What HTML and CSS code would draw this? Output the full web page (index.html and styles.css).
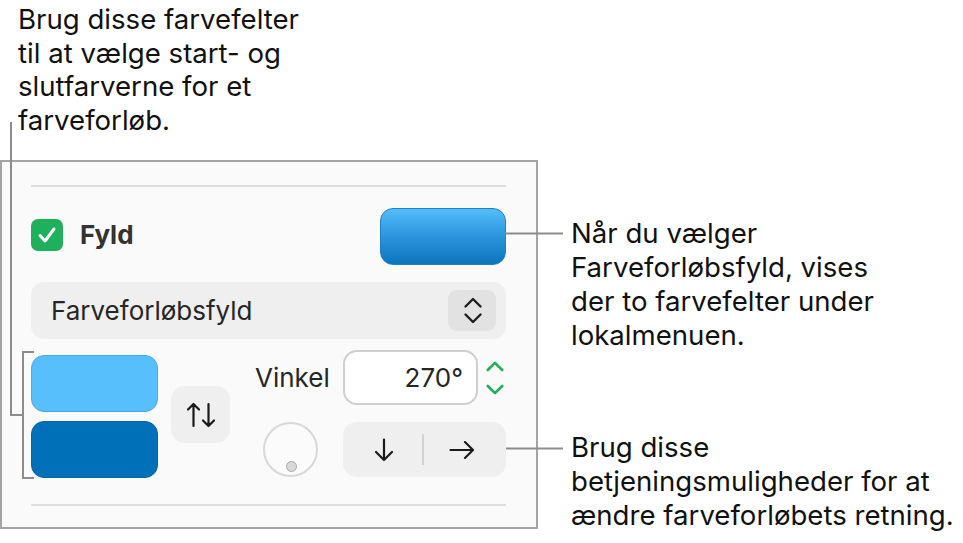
FILE: index.html
```html
<!DOCTYPE html>
<html lang="da">
<head>
<meta charset="utf-8">
<title>Fyld</title>
<link rel="stylesheet" href="styles.css">
</head>
<body>
<div class="figure">
  <div class="col-left">
    <p class="callout callout-tl">Brug disse farvefelter<br>til at vælge start- og<br>slutfarverne for et<br>farveforløb.</p>
    <section class="panel">
      <div class="sep"></div>
      <div class="fill-row">
        <span class="checkbox"><svg width="32" height="32" viewBox="0 0 32 32"><polyline points="9,16.5 14,22 23,10" fill="none" stroke="#fff" stroke-width="3" stroke-linecap="round" stroke-linejoin="round"/></svg></span>
        <span class="fill-label">Fyld</span>
        <span class="swatch swatch-main"></span>
      </div>
      <div class="popup">
        <span class="popup-text">Farveforløbsfyld</span>
        <span class="popup-btn"><svg width="48" height="42" viewBox="0 0 48 42"><path d="M17.5 16.5 L25 9 L32.5 16.5 M17.5 24.5 L25 32 L32.5 24.5" fill="none" stroke="#1f1f1f" stroke-width="2.4" stroke-linecap="round" stroke-linejoin="round"/></svg></span>
      </div>
      <div class="gradient-row">
        <div class="swatches">
          <span class="swatch swatch-light"></span>
          <span class="swatch swatch-dark"></span>
        </div>
        <div class="swap"><svg width="32" height="28" viewBox="0 0 32 28"><path d="M8.5 25 V3 M3 8.5 L8.5 3 L14 8.5 M23.5 3 V25 M18 19.5 L23.5 25 L29 19.5" fill="none" stroke="#1a1a1a" stroke-width="2.2" stroke-linecap="round" stroke-linejoin="round"/></svg></div>
        <div class="angle">
          <span class="angle-label">Vinkel</span>
          <div class="field-wrap">
            <div class="angle-field">270°</div>
            <svg class="stepper" width="18" height="34" viewBox="0 0 18 34"><path d="M1.8 9 L9 1.8 L16.2 9 M1.8 25 L9 32.2 L16.2 25" fill="none" stroke="#1eae57" stroke-width="2.6" stroke-linecap="round" stroke-linejoin="round"/></svg>
          </div>
          <div class="wheel"><span class="wheel-dot"></span></div>
          <div class="dir-group">
            <span class="dir-cell"><svg width="20" height="24" viewBox="0 0 20 24"><path d="M10 1.5 V22 M2 14 L10 22 L18 14" fill="none" stroke="#1a1a1a" stroke-width="2.2" stroke-linecap="round" stroke-linejoin="round"/></svg></span>
            <span class="dir-divider"></span>
            <span class="dir-cell"><svg width="26" height="18" viewBox="0 0 26 18"><path d="M1.5 9 H24 M16 1 L24 9 L16 17" fill="none" stroke="#1a1a1a" stroke-width="2.2" stroke-linecap="round" stroke-linejoin="round"/></svg></span>
          </div>
        </div>
      </div>
      <div class="sep sep-bottom"></div>
    </section>
  </div>
  <div class="col-right">
    <p class="callout callout-r1">Når du vælger<br>Farveforløbsfyld, vises<br>der to farvefelter under<br>lokalmenuen.</p>
    <p class="callout callout-r2">Brug disse<br>betjeningsmuligheder for at<br>ændre farveforløbets retning.</p>
  </div>
  <svg class="leaders" width="963" height="543" viewBox="0 0 963 543">
    <path d="M11 122 V415 H23" fill="none" stroke="#8c8c8c" stroke-width="2"/>
    <path d="M34 352 H23 V478 H34" fill="none" stroke="#8c8c8c" stroke-width="2"/>
    <path d="M505 233.5 H563" fill="none" stroke="#8c8c8c" stroke-width="2"/>
    <path d="M506 448.5 H563" fill="none" stroke="#8c8c8c" stroke-width="2"/>
  </svg>
</div>
</body>
</html>
```

FILE: styles.css
```css
* { box-sizing: border-box; }

html, body {
  margin: 0;
  padding: 0;
  background: #ffffff;
}

body {
  font-family: Inter, "Noto Sans", "DejaVu Sans", sans-serif;
  color: #111111;
}

.figure {
  position: relative;
  width: 963px;
  height: 543px;
  display: flex;
  overflow: hidden;
}

.col-left {
  width: 538px;
  flex: none;
  display: flex;
  flex-direction: column;
}

.col-right {
  margin-left: 33px;
  display: flex;
  flex-direction: column;
}

.callout {
  margin: 0;
  font-size: 27.6px;
  line-height: 34px;
  white-space: nowrap;
  color: #111111;
}

.callout-tl {
  padding-left: 18px;
  margin-top: 3px;
  line-height: 33.5px;
}

.callout-r1 { margin-top: 216px; }
.callout-r2 { margin-top: 78px; }

.panel {
  margin-top: 23px;
  width: 538px;
  height: 369px;
  border: 2px solid #a3a3a3;
  background: #fafafa;
  padding: 23px 30.5px 0 29px;
  display: flex;
  flex-direction: column;
}

.sep {
  height: 2px;
  background: #dedede;
  flex: none;
}

.sep-bottom { margin-top: 26px; }

.fill-row {
  margin-top: 20.5px;
  height: 57px;
  display: flex;
  align-items: center;
}

.checkbox {
  width: 32px;
  height: 32px;
  border-radius: 7px;
  background: #1fb05c;
  display: flex;
  margin-top: -3px;
}

.fill-label {
  margin-left: 17px;
  margin-top: -3px;
  font-size: 26px;
  font-weight: 700;
  color: #333333;
}

.swatch {
  display: block;
  width: 127px;
  height: 57px;
  border-radius: 13px;
}

.swatch-main {
  margin-left: auto;
  width: 126px;
  background: linear-gradient(#54bcf8, #2a95de 50%, #0b74bd);
  border: 1.5px solid #1f7fc2;
}

.popup {
  margin-top: 17.5px;
  height: 57px;
  border-radius: 13px;
  background: #efefef;
  display: flex;
  align-items: center;
  justify-content: space-between;
  padding: 0 9.5px 0 20px;
}

.popup-text {
  font-size: 26px;
  color: #262626;
}

.popup-btn {
  width: 48px;
  height: 41.5px;
  border-radius: 9px;
  background: #e2e2e2;
  display: flex;
}

.gradient-row {
  margin-top: 11px;
  display: flex;
  align-items: flex-start;
}

.swatches {
  padding-top: 4.5px;
  display: flex;
  flex-direction: column;
  gap: 9px;
}

.swatch-light {
  background: #57bffc;
  border: 1.5px solid #4aaae8;
}

.swatch-dark {
  background: #0071b9;
  border: 1.5px solid #0066a8;
}

.swap {
  margin-left: 13px;
  margin-top: 36px;
  width: 59px;
  height: 57px;
  border-radius: 14px;
  background: #efefef;
  display: flex;
  align-items: center;
  justify-content: center;
}

.angle {
  margin-left: 25px;
  display: grid;
  grid-template-columns: 87.5px auto;
  grid-template-rows: 55px 55px;
  row-gap: 17px;
}

.angle-label {
  align-self: center;
  font-size: 26px;
  color: #262626;
}

.field-wrap {
  display: flex;
  align-items: center;
}

.angle-field {
  width: 135px;
  height: 55px;
  border: 2px solid #cfcfcf;
  border-radius: 14px;
  background: #ffffff;
  font-size: 26px;
  color: #262626;
  display: flex;
  align-items: center;
  justify-content: flex-end;
  padding-right: 12.5px;
}

.stepper {
  margin-left: 8px;
}

.wheel {
  position: relative;
  margin-left: 8px;
  width: 55px;
  height: 55px;
  border: 2px solid #d8d8d8;
  border-radius: 50%;
  background: #fbfbfb;
}

.wheel-dot {
  position: absolute;
  left: 20.5px;
  top: 36.5px;
  width: 11px;
  height: 11px;
  border-radius: 50%;
  background: #d9d9d9;
  border: 1.5px solid #a8a8a8;
}

.dir-group {
  width: 163px;
  height: 55px;
  border-radius: 14px;
  background: #efefef;
  display: grid;
  grid-template-columns: 1fr 2px 1fr;
  align-items: center;
  padding: 0 6px 0 4px;
}

.dir-cell {
  display: flex;
  align-items: center;
  justify-content: center;
}

.dir-divider {
  width: 2px;
  height: 31px;
  background: #d2d2d2;
}

.leaders {
  position: absolute;
  left: 0;
  top: 0;
  pointer-events: none;
}
```
